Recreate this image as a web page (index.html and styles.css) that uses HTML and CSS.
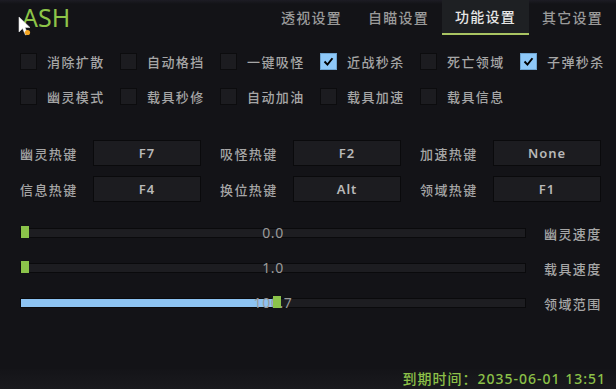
FILE: index.html
```html
<!DOCTYPE html>
<html lang="zh-CN">
<head>
  <meta charset="UTF-8" />
  <meta name="viewport" content="width=device-width, initial-scale=1.0"/>
  <title>ASH</title>
  <link rel="stylesheet" href="styles.css">
</head>
<body>
  <div class="panel">
    <header class="topbar">
      <div class="logo">ASH</div>
      <nav class="tabs">
        <div class="tab">透视设置</div>
        <div class="tab">自瞄设置</div>
        <div class="tab active">功能设置</div>
        <div class="tab">其它设置</div>
      </nav>
    </header>

    <main class="content">
      <!-- 开关 -->
      <div class="checks">
        <label class="check"><span class="box"></span>消除扩散</label>
        <label class="check"><span class="box"></span>自动格挡</label>
        <label class="check"><span class="box"></span>一键吸怪</label>
        <label class="check"><span class="box on"><svg viewBox="0 0 17 17"><path d="M4 8.5 L7.3 12 L13 4.8" fill="none" stroke="#000" stroke-width="2.2"/></svg></span>近战秒杀</label>
        <label class="check"><span class="box"></span>死亡领域</label>
        <label class="check"><span class="box on"><svg viewBox="0 0 17 17"><path d="M4 8.5 L7.3 12 L13 4.8" fill="none" stroke="#000" stroke-width="2.2"/></svg></span>子弹秒杀</label>
        <label class="check"><span class="box"></span>幽灵模式</label>
        <label class="check"><span class="box"></span>载具秒修</label>
        <label class="check"><span class="box"></span>自动加油</label>
        <label class="check"><span class="box"></span>载具加速</label>
        <label class="check"><span class="box"></span>载具信息</label>
      </div>

      <!-- 热键 -->
      <div class="hotkeys">
        <div class="hotkey"><span class="hk-label">幽灵热键</span><span class="hk-key">F7</span></div>
        <div class="hotkey"><span class="hk-label">吸怪热键</span><span class="hk-key">F2</span></div>
        <div class="hotkey"><span class="hk-label">加速热键</span><span class="hk-key">None</span></div>
        <div class="hotkey"><span class="hk-label">信息热键</span><span class="hk-key">F4</span></div>
        <div class="hotkey"><span class="hk-label">换位热键</span><span class="hk-key">Alt</span></div>
        <div class="hotkey"><span class="hk-label">领域热键</span><span class="hk-key">F1</span></div>
      </div>

      <!-- 滑块 -->
      <div class="sliders">
        <div class="slider">
          <div class="track">
            <div class="fill" style="width: 0px"></div>
            <span class="value">0.0</span>
            <span class="thumb" style="left: 0px"></span>
          </div>
          <span class="slider-label">幽灵速度</span>
        </div>
        <div class="slider">
          <div class="track">
            <div class="fill" style="width: 0px"></div>
            <span class="value">1.0</span>
            <span class="thumb" style="left: 0px"></span>
          </div>
          <span class="slider-label">载具速度</span>
        </div>
        <div class="slider">
          <div class="track">
            <div class="fill" style="width: 255px"></div>
            <span class="value">100.7</span>
            <span class="thumb" style="left: 252px"></span>
          </div>
          <span class="slider-label">领域范围</span>
        </div>
      </div>
    </main>

    <footer class="footer">到期时间：2035-06-01 13:51</footer>

    <!-- 鼠标指针 -->
    <svg class="cursor" width="16" height="22" viewBox="0 0 16 22">
      <path d="M1 1 L1 16 L4.5 12.5 L7.5 19 L10 18 L7 11.5 L12 11.5 Z" fill="#fff" stroke="#ddd" stroke-width="0.6"/>
      <circle cx="9.5" cy="16.5" r="2.6" fill="#f5a623"/>
    </svg>
  </div>
</body>
</html>
```

FILE: styles.css
```css
* {
  margin: 0;
  padding: 0;
  box-sizing: border-box;
}

body {
  background: #131317;
  font-family: "Noto Sans", "Noto Sans CJK SC", sans-serif;
  color: #a8a8a8;
}

.panel {
  position: relative;
  width: 616px;
  height: 389px;
  display: flex;
  flex-direction: column;
  background: #131317;
  overflow: hidden;
}

/* 顶部 */
.topbar {
  height: 35px;
  display: flex;
  align-items: stretch;
  justify-content: space-between;
  background: linear-gradient(to bottom, #1d1c24 0px, #131317 4px);
}

.logo {
  padding-left: 22px;
  font-size: 25px;
  line-height: 35px;
  color: #8dc448;
}

.tabs {
  display: flex;
}

.tab {
  width: 87px;
  text-align: center;
  font-size: 14px;
  letter-spacing: 1.3px;
  line-height: 35px;
  color: #9a9a9a;
  font-weight: 500;
}

.tab.active {
  background: #1e2023;
  color: #e6e6e6;
  border-bottom: 2px solid #a9c462;
  line-height: 34px;
}

/* 内容 */
.content {
  padding: 18px 0 0 20px;
}

.checks {
  display: grid;
  grid-template-columns: repeat(6, 100px);
  row-gap: 18px;
}

.check {
  display: flex;
  align-items: center;
  height: 17px;
  font-size: 13px;
  letter-spacing: 1.4px;
  font-weight: 500;
  color: #a6a6a6;
}

.box {
  width: 17px;
  height: 17px;
  margin-right: 10px;
  background: #1c1c20;
  border: 1px solid #0c0c0e;
  display: flex;
}

.box.on {
  background: #8ec8f8;
  border-color: #6fa4d0;
}

.box svg {
  width: 15px;
  height: 15px;
}

.hotkeys {
  margin-top: 35px;
  display: grid;
  grid-template-columns: repeat(3, 200px);
  row-gap: 10px;
}

.hotkey {
  display: flex;
  align-items: center;
}

.hk-label {
  width: 73px;
  font-size: 13px;
  letter-spacing: 1.4px;
  font-weight: 500;
  color: #a6a6a6;
}

.hk-key {
  width: 108px;
  height: 26px;
  line-height: 25px;
  text-align: center;
  background: #1c1c20;
  border: 1px solid #0a0a0c;
  font-size: 13px;
  font-weight: 600;
  letter-spacing: 1px;
  color: #b8b8b8;
}

.sliders {
  margin-top: 25px;
  display: flex;
  flex-direction: column;
  gap: 23px;
}

.slider {
  display: flex;
  align-items: center;
  height: 12px;
}

.track {
  position: relative;
  width: 506px;
  height: 10px;
  background: #1d1d21;
  border: 1px solid #0a0a0c;
}

.fill {
  height: 100%;
  background: #8dc3f2;
}

.value {
  position: absolute;
  left: 0;
  right: 0;
  top: -6px;
  text-align: center;
  font-size: 14px;
  line-height: 20px;
  letter-spacing: 0.6px;
  color: #9a9a9a;
}

.thumb {
  position: absolute;
  top: -3px;
  width: 8px;
  height: 12px;
  background: #8bc34a;
}

.slider-label {
  margin-left: 18px;
  font-size: 13px;
  letter-spacing: 1.4px;
  font-weight: 500;
  color: #a6a6a6;
}

/* 底部 */
.footer {
  margin-top: auto;
  height: 20px;
  padding-right: 10px;
  text-align: right;
  font-size: 14px;
  font-weight: 500;
  line-height: 20px;
  letter-spacing: 1px;
  color: #8cc048;
  background: linear-gradient(to bottom, #141418, #1a1a1e);
}

.cursor {
  position: absolute;
  left: 18px;
  top: 16px;
}
```
